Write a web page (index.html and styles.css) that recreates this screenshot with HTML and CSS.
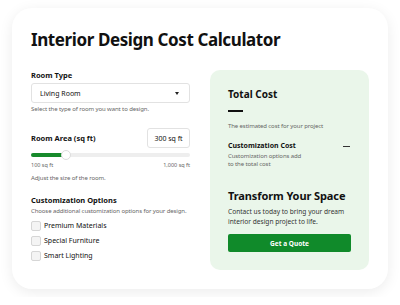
FILE: index.html
```html
<!DOCTYPE html>
<html lang="en">
<head>
  <meta charset="UTF-8" />
  <title>Interior Design Cost Calculator</title>
  <link rel="stylesheet" href="styles.css">
</head>
<body>
  <div class="card">
    <h1>Interior Design Cost Calculator</h1>

    <div class="columns">
      <div class="form">
        <div class="field field-type">
          <label class="label">Room Type</label>
          <div class="select">
            <span>Living Room</span>
            <span class="caret"></span>
          </div>
          <p class="hint">Select the type of room you want to design.</p>
        </div>

        <div class="field">
          <div class="area-head">
            <label class="label">Room Area (sq ft)</label>
            <div class="area-input">300 sq ft</div>
          </div>
          <div class="slider">
            <div class="slider-fill" style="width: 22%"></div>
            <div class="slider-thumb" style="left: 22%"></div>
          </div>
          <div class="slider-range">
            <span>100 sq ft</span>
            <span>1,000 sq ft</span>
          </div>
          <p class="hint">Adjust the size of the room.</p>
        </div>

        <div class="field">
          <label class="label options-label">Customization Options</label>
          <p class="hint">Choose additional customization options for your design.</p>
          <ul class="options">
            <li><span class="box"></span>Premium Materials</li>
            <li><span class="box"></span>Special Furniture</li>
            <li><span class="box"></span>Smart Lighting</li>
          </ul>
        </div>
      </div>

      <div class="summary">
        <h2>Total Cost</h2>
        <div class="total-value"></div>
        <p class="hint">The estimated cost for your project</p>

        <div class="cost-row">
          <div>
            <h4>Customization Cost</h4>
            <p class="hint">Customization options add<br>to the total cost</p>
          </div>
          <span class="cost-dash"></span>
        </div>

        <h3>Transform Your Space</h3>
        <p class="cta-text">Contact us today to bring your dream interior design project to life.</p>
        <button class="quote">Get a Quote</button>
      </div>
    </div>
  </div>
</body>
</html>
```

FILE: styles.css
```css
body {
  margin: 0;
  padding: 8px 12px;
  font-family: "Noto Sans", "Open Sans", sans-serif;
  background: #fff;
  color: #111;
}

.card {
  width: 376px;
  height: 281px;
  box-sizing: border-box;
  padding: 21px 19px;
  background: #fff;
  border-radius: 20px;
  box-shadow: 0 3px 14px rgba(0, 0, 0, 0.08);
}

h1 {
  margin: 0 0 19px;
  font-size: 17px;
  line-height: 22px;
  font-weight: 700;
  letter-spacing: -0.4px;
}

.columns {
  display: grid;
  grid-template-columns: 159px 159px;
  gap: 20px;
}

.field {
  margin-bottom: 12px;
}

.field-type {
  margin-bottom: 14px;
}

.label {
  display: block;
  font-size: 7.5px;
  font-weight: 700;
  line-height: 10px;
}

.options-label {
  margin-bottom: 2px;
}

.hint {
  margin: 0;
  font-size: 6px;
  line-height: 9px;
  color: #666;
  letter-spacing: -0.1px;
}

.select {
  margin: 3px 0 2px;
  height: 20px;
  box-sizing: border-box;
  border: 1px solid #e2e2e2;
  border-radius: 3px;
  padding: 0 10px 0 8px;
  display: flex;
  align-items: center;
  justify-content: space-between;
  font-size: 7px;
}

.caret {
  width: 0;
  height: 0;
  border-left: 2.5px solid transparent;
  border-right: 2.5px solid transparent;
  border-top: 3px solid #222;
}

.area-head {
  display: flex;
  justify-content: space-between;
  align-items: center;
  margin-top: 1px;
}

.area-input {
  width: 43px;
  height: 20px;
  box-sizing: border-box;
  border: 1px solid #e2e2e2;
  border-radius: 3px;
  font-size: 7px;
  display: flex;
  align-items: center;
  justify-content: center;
}

.slider {
  position: relative;
  margin: 5px 0 4px;
  height: 4px;
  border-radius: 2px;
  background: #eee;
}

.slider-fill {
  height: 100%;
  border-radius: 2px;
  background: #178a2c;
}

.slider-thumb {
  position: absolute;
  top: -3px;
  width: 10px;
  height: 10px;
  margin-left: -5px;
  box-sizing: border-box;
  border: 1px solid #ddd;
  border-radius: 50%;
  background: #fff;
}

.slider-range {
  display: flex;
  justify-content: space-between;
  font-size: 5.5px;
  line-height: 8px;
  color: #666;
  margin-bottom: 5px;
}

.options {
  list-style: none;
  margin: 5px 0 0;
  padding: 0;
}

.options li {
  display: flex;
  align-items: center;
  gap: 3px;
  font-size: 7px;
  line-height: 10px;
  margin-bottom: 5px;
}

.box {
  width: 10px;
  height: 10px;
  box-sizing: border-box;
  border: 1px solid #d6d6d6;
  border-radius: 2px;
  background: #f4f4f4;
}

.summary {
  background: #eaf6ea;
  border-radius: 10px;
  padding: 17px 18px;
  height: 200px;
  box-sizing: border-box;
}

.summary h2 {
  margin: 0;
  font-size: 10px;
  line-height: 14px;
}

.total-value {
  width: 15px;
  height: 2px;
  background: #111;
  margin: 9px 0 10px;
}

.cost-row {
  display: flex;
  justify-content: space-between;
  align-items: flex-start;
  margin: 10px 0 20px;
}

.cost-row h4 {
  margin: 0 0 1px;
  font-size: 7px;
  line-height: 10px;
}

.cost-row .hint {
  line-height: 8px;
}

.cost-dash {
  width: 7px;
  height: 1px;
  background: #333;
  margin: 5px 1px 0 0;
}

.summary h3 {
  margin: 0 0 3px;
  font-size: 11px;
  line-height: 16px;
  letter-spacing: -0.1px;
}

.cta-text {
  margin: 0 0 7px;
  font-size: 6.6px;
  line-height: 10px;
  color: #333;
}

.quote {
  display: block;
  width: 100%;
  height: 18px;
  border: none;
  border-radius: 2px;
  background: #108a2a;
  color: #fff;
  font-family: inherit;
  font-size: 6.5px;
  font-weight: 700;
}
```
